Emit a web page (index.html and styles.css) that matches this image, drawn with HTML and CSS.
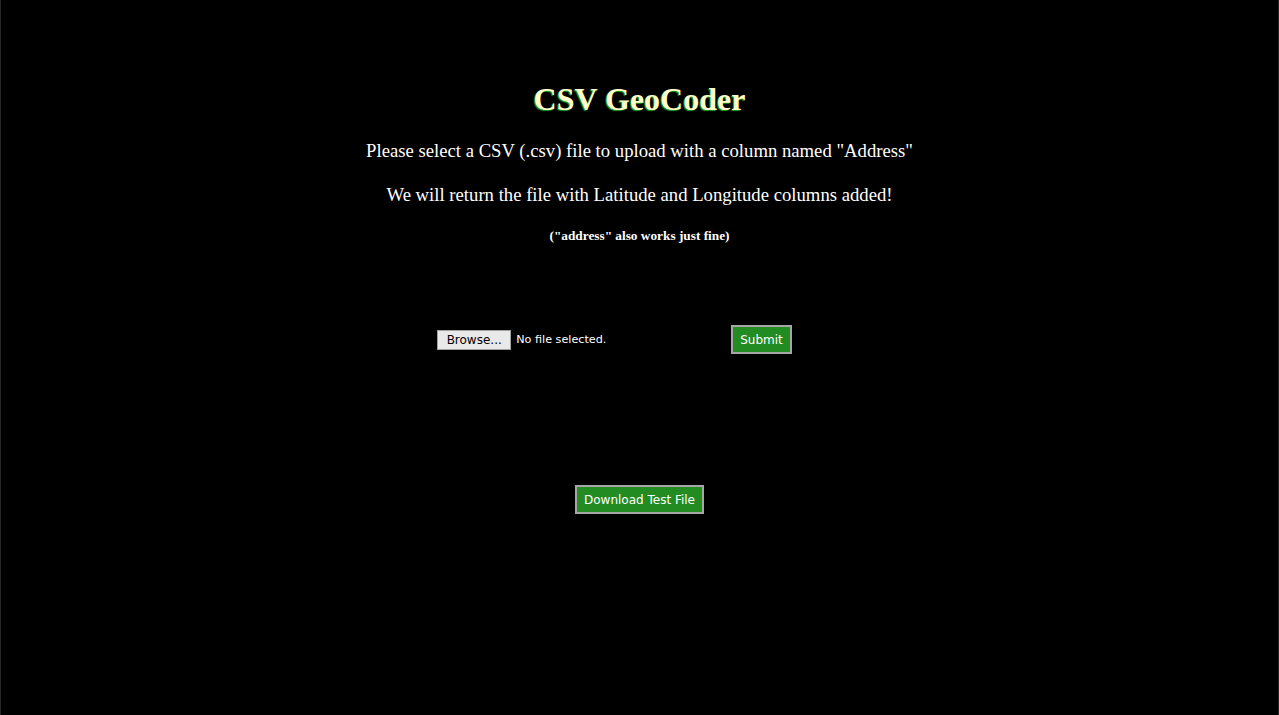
FILE: index.html
```html
<!DOCTYPE html>
<html>
<head>
<meta charset="utf-8">
<title>CSV GeoCoder</title>
<link rel="stylesheet" href="styles.css">
</head>
<body>
<div class="page">
  <h1 class="title">CSV GeoCoder</h1>
  <p class="lead">Please select a CSV (.csv) file to upload with a column named "Address"</p>
  <p class="lead">We will return the file with Latitude and Longitude columns added!</p>
  <p class="note">("address" also works just fine)</p>
  <form class="upload">
    <div class="file">
      <span class="browse">Browse...</span>
      <span class="file-name">No file selected.</span>
    </div>
    <button type="button" class="btn">Submit</button>
  </form>
  <div class="download">
    <button type="button" class="btn">Download Test File</button>
  </div>
</div>
</body>
</html>
```
FILE: styles.css
```css
html, body {
  margin: 0;
  padding: 0;
  background: #000;
  height: 100%;
}
.page {
  box-sizing: border-box;
  height: 715px;
  border-left: 1px solid #262626;
  border-right: 1px solid #262626;
  color: #fff;
  font-family: "Liberation Serif", "Times New Roman", serif;
  text-align: center;
  padding-top: 81px;
}
.title {
  margin: 0;
  font-size: 32px;
  line-height: 37px;
  font-weight: bold;
  color: #ffffcc;
  text-shadow: -1px 1px 1px #1fa01f;
}
.lead {
  margin: 0;
  font-size: 18.7px;
  line-height: 22px;
}
.title + .lead {
  margin-top: 22px;
}
.lead + .lead {
  margin-top: 22px;
}
.note {
  margin: 22px 0 0;
  font-size: 13.3px;
  line-height: 15px;
  font-weight: bold;
}
.upload {
  margin: 82px 0 0;
  display: flex;
  justify-content: center;
  align-items: center;
  padding-right: 50px;
  font-family: "DejaVu Sans", Tahoma, sans-serif;
  font-size: 12px;
}
.file {
  width: 294px;
  display: flex;
  align-items: center;
  text-align: left;
}
.browse {
  box-sizing: border-box;
  width: 74px;
  height: 20px;
  line-height: 18px;
  text-align: center;
  background: #e9e9e9;
  color: #000;
  border: 1px solid #a0a0a0;
}
.file-name {
  margin-left: 5px;
  color: #fff;
  font-size: 11.2px;
}
.btn {
  box-sizing: border-box;
  height: 29px;
  padding: 0 7px;
  background: #228b22;
  color: #fff;
  border: 2px solid #a6a6a6;
  font-family: "DejaVu Sans", Tahoma, sans-serif;
  font-size: 12px;
}
.download {
  margin-top: 131px;
  display: flex;
  justify-content: center;
}
```
